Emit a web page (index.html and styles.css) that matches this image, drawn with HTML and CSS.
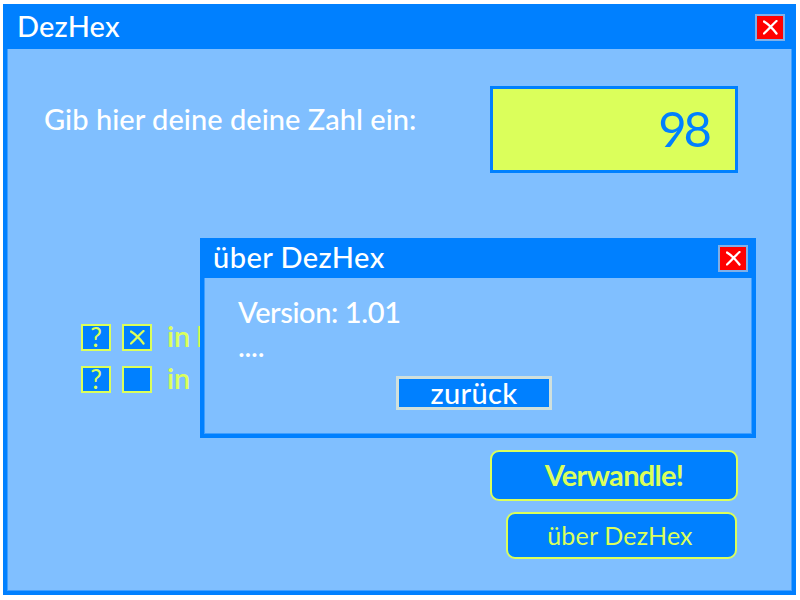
FILE: index.html
```html
<!DOCTYPE html>
<html lang="de">
<head>
<meta charset="utf-8">
<title>DezHex</title>
<link rel="stylesheet" href="styles.css">
</head>
<body>
<main class="window">
  <header class="titlebar">
    <h1 class="title main-title">DezHex</h1>
    <button class="close" aria-label="Schließen"><svg class="cross" viewBox="0 0 15 15"><path d="M1 1.5C5 4 10 9 13.5 13.5M13.5 1C9 5 5 10 1 13.5"/></svg></button>
  </header>
  <div class="body">
    <div class="entry">
      <label class="prompt">Gib hier deine deine Zahl ein:</label>
      <div class="field">98</div>
    </div>
    <div class="options">
      <div class="option">
        <button class="box">?</button>
        <button class="box" aria-label="Gewählt"><svg class="cross" viewBox="0 0 15 15"><path d="M1 1.5C5 4 10 9 13.5 13.5M13.5 1C9 5 5 10 1 13.5"/></svg></button>
        <span class="option-text">in B</span>
      </div>
      <div class="option">
        <button class="box">?</button>
        <button class="box" aria-label="Nicht gewählt"></button>
        <span class="option-text">in</span>
      </div>
    </div>
    <div class="actions">
      <button class="action convert">Verwandle!</button>
      <button class="action about">über DezHex</button>
    </div>
  </div>
</main>
<section class="dialog">
  <header class="titlebar dialog-bar">
    <h2 class="title dialog-title">über DezHex</h2>
    <button class="close" aria-label="Schließen"><svg class="cross" viewBox="0 0 15 15"><path d="M1 1.5C5 4 10 9 13.5 13.5M13.5 1C9 5 5 10 1 13.5"/></svg></button>
  </header>
  <div class="dialog-body">
    <p class="version">Version: 1.01</p>
    <p class="dots">....</p>
    <button class="back">zurück</button>
  </div>
</section>
</body>
</html>
```
FILE: styles.css
```css
* { box-sizing: border-box; margin: 0; padding: 0; }

body {
  width: 800px;
  height: 600px;
  overflow: hidden;
  background: #fff;
  color: #fff;
  font-family: "Comic Sans MS", Lato, "Open Sans", sans-serif;
  font-size: 29px;
  font-weight: 500;
}

button { font: inherit; color: inherit; cursor: pointer; }

.window {
  display: flex;
  flex-direction: column;
  width: 793px;
  height: 591px;
  margin: 4px 4px 5px 3px;
  background: #80bfff;
  border: 4px solid #0080ff;
  border-top: 0;
}

.titlebar {
  display: flex;
  justify-content: space-between;
  align-items: flex-start;
  height: 45px;
  margin: 0 -4px;
  padding: 10px 11px 0 14px;
  background: #0080ff;
}

.title { font-size: 29px; font-weight: 500; line-height: 24px; white-space: nowrap; }
.main-title { letter-spacing: .2px; }

.close {
  display: flex;
  align-items: center;
  justify-content: center;
  width: 30px;
  height: 27px;
  background: #f00;
  border: 2px solid #80b0e8;
}

.cross {
  width: 15px;
  height: 15px;
  fill: none;
  stroke: currentColor;
  stroke-width: 2.3;
  stroke-linecap: round;
}

.body {
  flex: 1;
  border: 1px solid #409fff;
  border-top: 0;
}

.entry {
  display: flex;
  justify-content: space-between;
  padding: 37px 53px 0 36px;
}

.prompt { padding-top: 17px; line-height: 32px; letter-spacing: .04px; white-space: nowrap; }

.field {
  width: 248px;
  height: 87px;
  padding-right: 26px;
  background: #dbff5b;
  border: 3px solid #0080ff;
  color: #0080ff;
  font-size: 49px;
  font-weight: 400;
  line-height: 79px;
  letter-spacing: -3px;
  text-align: right;
}

.options {
  display: grid;
  gap: 15px;
  padding: 151px 0 0 73px;
  color: #dbff5b;
}

.option { display: flex; align-items: center; height: 27px; }

.box {
  display: flex;
  align-items: center;
  justify-content: center;
  width: 30px;
  height: 27px;
  margin-right: 11px;
  background: #0080ff;
  border: 2px solid #dbff5b;
  font-size: 26px;
  font-weight: 400;
  line-height: 23px;
}

.option-text {
  padding: 0 0 3px 4px;
  font-weight: 600;
  line-height: 24px;
  letter-spacing: -.3px;
  word-spacing: -1px;
}

.actions {
  display: flex;
  flex-direction: column;
  align-items: flex-end;
  gap: 11px;
  padding: 57px 53px 0 0;
}

.action {
  background: #0080ff;
  border: 2px solid #dbff5b;
  border-radius: 9px;
  color: #dbff5b;
}

.convert { width: 248px; height: 51px; padding-bottom: 2px; font-weight: 700; letter-spacing: -.7px; }
.about { width: 231px; height: 47px; padding: 0 3px 2px 0; margin-right: 1px; font-size: 25px; font-weight: 400; letter-spacing: .2px; }

.dialog {
  position: absolute;
  left: 200px;
  top: 238px;
  display: flex;
  flex-direction: column;
  width: 556px;
  height: 200px;
  background: #80bfff;
  border: 4px solid #0080ff;
  border-top: 0;
}

.dialog-bar { height: 40px; padding: 7px 8px 0 13px; }
.dialog-title { letter-spacing: .45px; }

.dialog-body {
  display: flex;
  flex: 1;
  flex-direction: column;
  padding: 18px 0 0 33px;
  border: 1px solid #409fff;
  border-top: 0;
}

.version { line-height: 32px; letter-spacing: -.4px; }
.dots { margin-top: 3px; line-height: 30px; letter-spacing: -.3px; }

.back {
  width: 156px;
  height: 34px;
  margin: 15px 0 0 158px;
  background: #0080ff;
  border: 3px solid #d0e0dc;
  line-height: 28px;
  letter-spacing: .3px;
}
```
